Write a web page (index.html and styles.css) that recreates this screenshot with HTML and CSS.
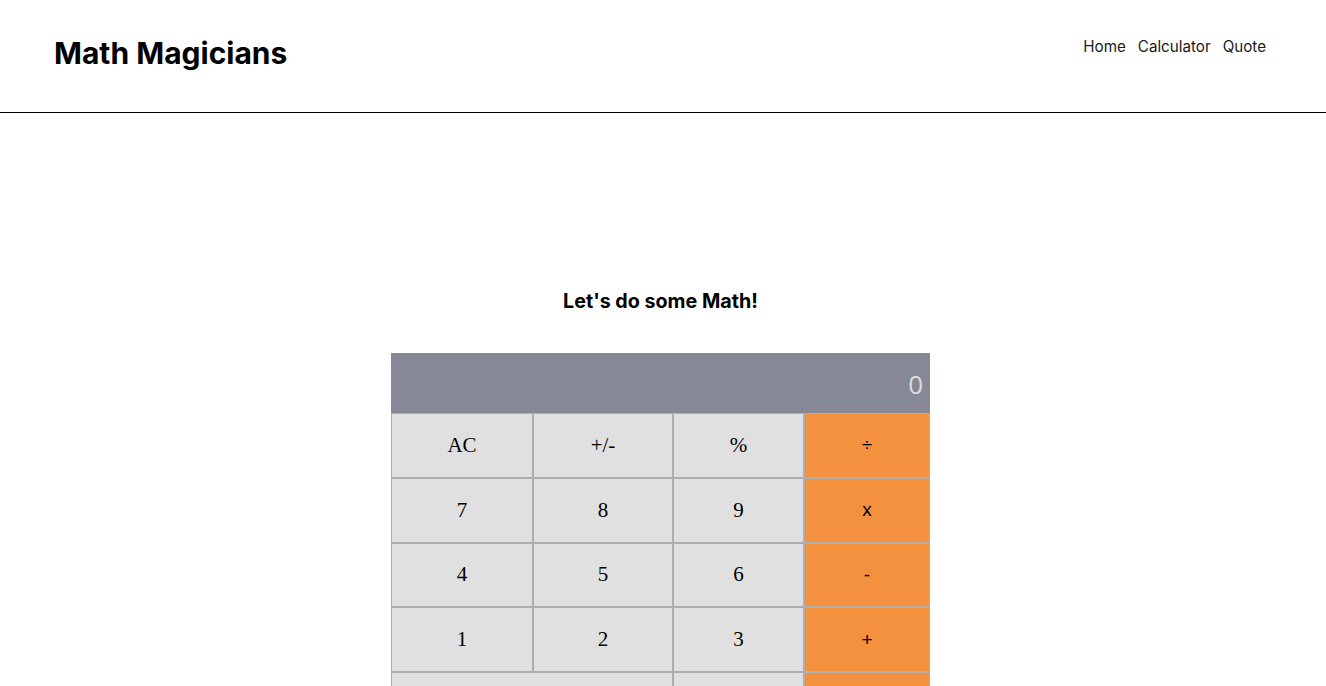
FILE: index.html
```html
<!DOCTYPE html>
<html lang="en">
<head>
<meta charset="utf-8">
<title>Math Magicians</title>
<link rel="stylesheet" href="styles.css">
</head>
<body>
<header class="site-header">
  <h1 class="logo">Math Magicians</h1>
  <nav class="nav">
    <a href="#" class="nav-link">Home</a>
    <a href="#" class="nav-link">Calculator</a>
    <a href="#" class="nav-link">Quote</a>
  </nav>
</header>
<main class="page">
  <h2 class="intro">Let's do some Math!</h2>
  <div class="calculator">
    <div class="display">0</div>
    <div class="keys">
      <button class="key">AC</button>
      <button class="key">+/-</button>
      <button class="key">%</button>
      <button class="key op">÷</button>
      <button class="key">7</button>
      <button class="key">8</button>
      <button class="key">9</button>
      <button class="key op">x</button>
      <button class="key">4</button>
      <button class="key">5</button>
      <button class="key">6</button>
      <button class="key op">-</button>
      <button class="key">1</button>
      <button class="key">2</button>
      <button class="key">3</button>
      <button class="key op">+</button>
      <button class="key zero">0</button>
      <button class="key">.</button>
      <button class="key op">=</button>
    </div>
  </div>
</main>
</body>
</html>
```

FILE: styles.css
```css
* { box-sizing: border-box; }

body {
  margin: 0;
  font-family: Inter, "Noto Sans", sans-serif;
  background: #fff;
  color: #000;
}

.site-header {
  height: 113px;
  border-bottom: 1px solid #000;
  display: flex;
  justify-content: space-between;
  align-items: flex-start;
  padding: 0 60px 0 54px;
}

.logo {
  margin: 35px 0 0;
  font-size: 30px;
  font-weight: 700;
  line-height: 36px;
}

.nav {
  display: flex;
  gap: 12px;
  margin-top: 37px;
}

.nav-link {
  color: #1a1a1a;
  text-decoration: none;
  font-size: 15.2px;
  line-height: 20px;
}

.page {
  display: flex;
  flex-direction: column;
  align-items: center;
  padding-right: 5px;
}

.intro {
  margin: 176px 0 0;
  font-size: 19.7px;
  font-weight: 700;
  line-height: 24px;
}

.calculator {
  margin-top: 40px;
  width: 539px;
}

.display {
  height: 60px;
  background: #868896;
  color: #dcdcdc;
  text-align: right;
  font-family: "Open Sans", "Noto Sans", sans-serif;
  font-size: 26px;
  line-height: 28px;
  padding: 17px 7px 0 0;
}

.keys {
  display: grid;
  grid-template-columns: 142px 140px 131px 126px;
  grid-auto-rows: 64.75px;
}

.key {
  margin: 0;
  border: 1px solid #b0adad;
  background: #e0e0e0;
  font-family: "Liberation Serif", "DejaVu Serif", serif;
  font-size: 21px;
  color: #000;
  padding: 0;
}

.key.op {
  background: #f4913e;
  font-family: "Liberation Sans", Arial, sans-serif;
  font-size: 19px;
}

.key.zero {
  grid-column: span 2;
}
```
